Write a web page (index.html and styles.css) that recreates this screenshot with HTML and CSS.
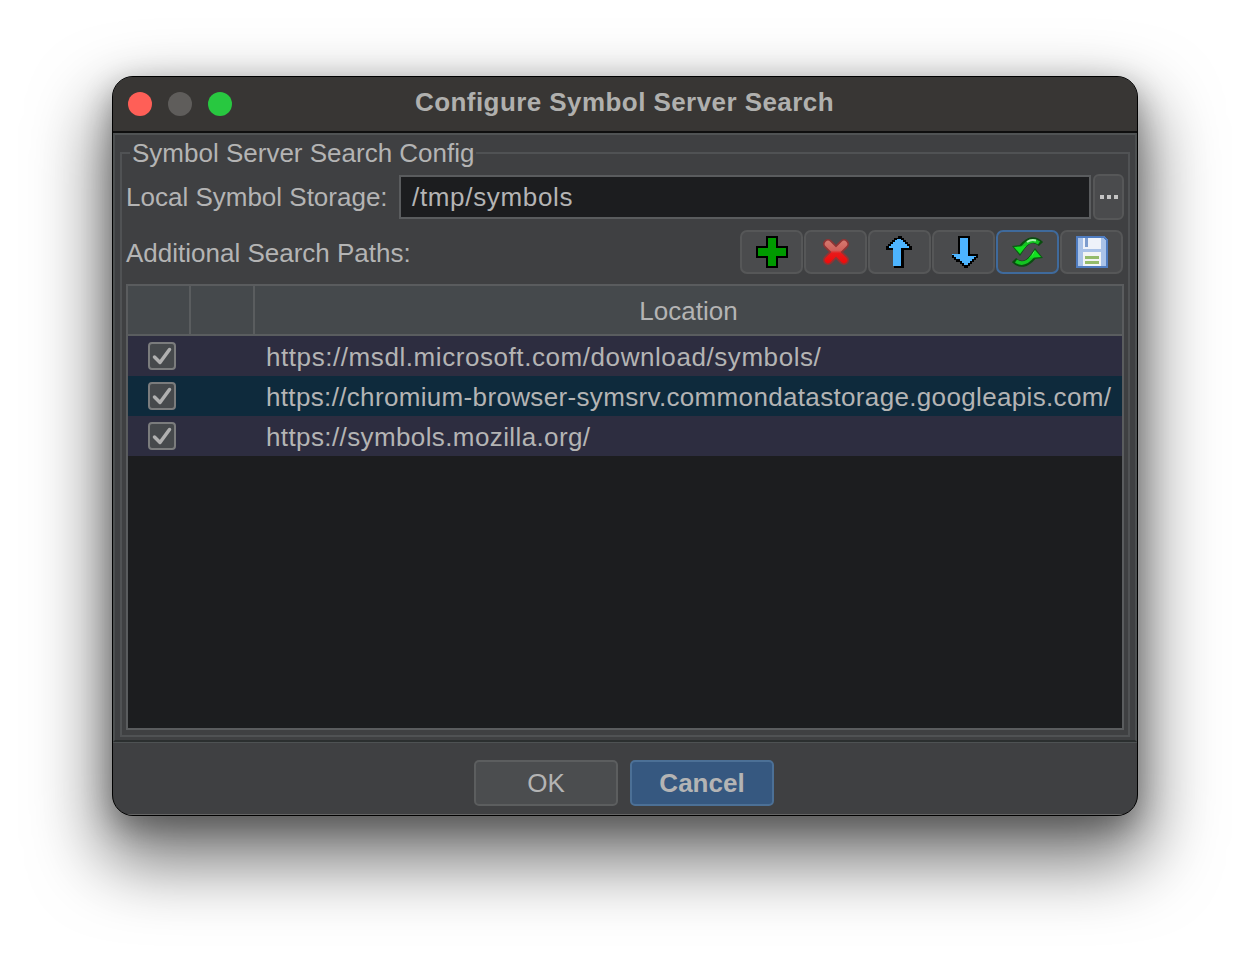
FILE: index.html
```html
<!DOCTYPE html>
<html lang="en">
<head>
<meta charset="utf-8">
<title>Configure Symbol Server Search</title>
<link rel="stylesheet" href="styles.css">
</head>
<body>
<div class="window">
  <header class="titlebar">
    <div class="lights"><span class="light red"></span><span class="light grey"></span><span class="light green"></span></div>
    <div class="title">Configure Symbol Server Search</div>
  </header>
  <main class="main">
    <fieldset class="group">
      <legend class="legend">Symbol Server Search Config</legend>
      <div class="storage">
        <label class="label">Local Symbol Storage:</label>
        <div class="input">/tmp/symbols</div>
        <button class="more" aria-label="Browse"><i></i><i></i><i></i></button>
      </div>
      <div class="paths">
        <span class="label">Additional Search Paths:</span>
        <div class="tools">
          <button class="tool" aria-label="Add">
            <svg width="32" height="32" viewBox="0 0 32 32" shape-rendering="crispEdges"><path d="M10 0h12v10h10v12H22v10H10V22H0V10h10z" fill="#000"/><path d="M12 2h8v10h10v8H20v10h-8V20H2v-8h10z" fill="#009a00"/></svg>
          </button>
          <button class="tool" aria-label="Remove">
            <svg width="32" height="32" viewBox="0 0 32 32">
              <defs><linearGradient id="xg" gradientUnits="userSpaceOnUse" x1="0" y1="5" x2="0" y2="27"><stop offset="0" stop-color="#d4796f"/><stop offset=".42" stop-color="#d0605a"/><stop offset=".55" stop-color="#e81a1a"/><stop offset="1" stop-color="#f00a0a"/></linearGradient></defs>
              <path d="M8 8 24 24M24 8 8 24" fill="none" stroke="#8f3434" stroke-width="10" stroke-linecap="round"/>
              <path d="M8 8 24 24M24 8 8 24" fill="none" stroke="url(#xg)" stroke-width="6.500" stroke-linecap="round"/>
            </svg>
          </button>
          <button class="tool" aria-label="Move up">
            <svg width="32" height="32" viewBox="0 0 32 32" shape-rendering="crispEdges"><path d="M14 0h4v2h2v2h2v2h2v2h2v2h2v4h-8v18H10V14H2v-4h2V8h2V6h2V4h2V2h4z" fill="#000"/><path d="M15 3h2v1h2v2h2v2h2v2h2v2h-8v18h-8V12H5v-2h2V8h2V6h2V4h2V3z" fill="#4db4ff"/></svg>
          </button>
          <button class="tool" aria-label="Move down">
            <svg width="32" height="32" viewBox="0 0 32 32" shape-rendering="crispEdges"><path d="M10 0h12v18h8v4h-2v2h-2v2h-2v2h-2v2h-2v2h-4v-2h-2v-2h-2v-2H8v-2H6v-2H4v-4h6z" fill="#000"/><path d="M12 2h8v18h8v1h-2v2h-2v2h-2v2h-2v2h-4v-2h-2v-2h-2v-2H8v-2H6v-2H4v-1h8z" fill="#4db4ff"/></svg>
          </button>
          <button class="tool focus" aria-label="Refresh">
            <svg width="32" height="32" viewBox="0 0 32 32">
              <g id="sync-top">
                <path d="M29 8Q20 -1 10 11" fill="none" stroke="#0a4d10" stroke-width="6"/>
                <path d="M0 10 16 8 8 20z" fill="#0a5c12"/>
                <path d="M27 7Q19 1 10 12" fill="none" stroke="#14c422" stroke-width="3.500"/>
                <path d="M2 11 14 10 8 18z" fill="#12e020"/>
                <path d="M24 4.500Q19 3 15 6" fill="none" stroke="#a6f5aa" stroke-width="2"/>
              </g>
              <g transform="rotate(180 15.500 16)">
                <path d="M29 8Q20 -1 10 11" fill="none" stroke="#0a4d10" stroke-width="6"/>
                <path d="M0 10 16 8 8 20z" fill="#0a5c12"/>
                <path d="M27 7Q19 1 10 12" fill="none" stroke="#14c422" stroke-width="3.500"/>
                <path d="M2 11 14 10 8 18z" fill="#12e020"/>
                <path d="M8 18 11 12 10 15z" fill="#a6f5aa"/>
              </g>
            </svg>
          </button>
          <button class="tool" aria-label="Save">
            <svg width="32" height="32" viewBox="0 0 32 32" shape-rendering="crispEdges"><path d="M0 0h28l4 4v28H0z" fill="#4f7cc0"/><path d="M2 2h25l3 3v25H2z" fill="#a9c2e8"/><path d="M7 2h18v11H7z" fill="#eef2fa"/><path d="M9 2h3v9H9z" fill="#7d9ccd"/><path d="M7 16h18v14H7z" fill="#f2f4f4"/><path d="M9 20h14v3H9zM9 25h14v3H9z" fill="#94bb6a"/></svg>
          </button>
        </div>
      </div>
      <div class="table">
        <div class="thead">
          <div class="th th-a"></div>
          <div class="th th-b"></div>
          <div class="th th-c">Location</div>
        </div>
        <div class="row alt">
          <div class="cell-check"><span class="check"><svg width="20" height="20" viewBox="0 0 20 20"><path d="M2.500 11 8 16.500 17.500 3.500" class="tick"/></svg></span></div>
          <div class="url url-ms">https://msdl.microsoft.com/download/symbols/</div>
        </div>
        <div class="row sel">
          <div class="cell-check"><span class="check"><svg width="20" height="20" viewBox="0 0 20 20"><path d="M2.500 11 8 16.500 17.500 3.500" class="tick"/></svg></span></div>
          <div class="url url-cr">https://chromium-browser-symsrv.commondatastorage.googleapis.com/</div>
        </div>
        <div class="row alt">
          <div class="cell-check"><span class="check"><svg width="20" height="20" viewBox="0 0 20 20"><path d="M2.500 11 8 16.500 17.500 3.500" class="tick"/></svg></span></div>
          <div class="url url-mz">https://symbols.mozilla.org/</div>
        </div>
      </div>
    </fieldset>
  </main>
  <footer class="footer">
    <button class="btn ok">OK</button>
    <button class="btn cancel">Cancel</button>
  </footer>
</div>
</body>
</html>
```
FILE: styles.css
```css
* { box-sizing: border-box; }
html, body { margin: 0; height: 100%; background: #fff; overflow: hidden; }
body {
  padding: 76px 112px 0;
  font-family: "Liberation Sans", Arial, sans-serif;
  font-size: 26px;
  color: #b4b4b4;
}
button { font: inherit; color: inherit; padding: 0; margin: 0; }
.window {
  width: 1026px;
  height: 740px;
  display: flex;
  flex-direction: column;
  background: #3f4042;
  border: 1px solid #000;
  border-radius: 21px;
  overflow: hidden;
  box-shadow: 0 36px 70px 10px rgba(0,0,0,.55), 0 10px 30px rgba(0,0,0,.3);
}
.titlebar {
  height: 56px;
  flex: none;
  display: flex;
  align-items: center;
  justify-content: center;
  position: relative;
  padding-bottom: 4px;
  background: #383634;
  border-bottom: 2px solid #0f0f0f;
}
.lights { position: absolute; left: 15px; top: 15px; display: flex; gap: 16px; }
.light { width: 24px; height: 24px; border-radius: 50%; }
.red { background: #ff5f57; }
.grey { background: #5f5d5b; }
.green { background: #28c840; }
.title { font-weight: 700; color: #b0b0ae; letter-spacing: .43px; margin-right: 1px; }
.main {
  flex: none;
  height: 609px;
  padding: 3px 5px;
  border: 2px solid #4c4f50;
  border-top-color: #505354;
  border-bottom-color: #2b2f2f;
}
.group {
  margin: 0;
  min-width: 0;
  height: 100%;
  padding: 0 4px 4px;
  border: 2px solid #505254;
}
.legend { padding: 0 2px; margin-left: 4px; line-height: 30px; }
.storage { display: flex; align-items: center; height: 46px; margin-top: 6px; }
.label { line-height: 30px; white-space: nowrap; }
.storage .label { width: 273px; flex: none; }
.input {
  width: 692px;
  height: 44px;
  flex: none;
  border: 2px solid #5a5c5e;
  background: #1c1d1f;
  padding-left: 11px;
  line-height: 40px;
  letter-spacing: .67px;
}
.more {
  width: 31px;
  height: 46px;
  flex: none;
  margin-left: 2px;
  border: 2px solid #565758;
  border-radius: 6px;
  background: #4a4b4d;
  display: flex;
  align-items: center;
  justify-content: center;
  gap: 3px;
}
.more i { width: 4px; height: 4px; background: #c4c4c4; }
.paths { display: flex; align-items: center; justify-content: space-between; height: 44px; margin-top: 10px; }
.paths .label { padding-top: 2px; }
.tools { display: flex; gap: 1px; margin-right: 1px; }
.tool {
  width: 63px;
  height: 44px;
  border: 2px solid #565758;
  border-radius: 7px;
  background: #4a4b4d;
  display: flex;
  align-items: center;
  justify-content: center;
}
.focus { border-color: #3f6a9c; }
.table {
  height: 446px;
  margin-top: 10px;
  border: 2px solid #5a5c5e;
  background: #1c1d1f;
}
.thead { display: flex; height: 50px; background: #45494c; border-bottom: 2px solid #5a5d5f; }
.th { border-right: 2px solid #5a5d5f; }
.th-a { width: 63px; }
.th-b { width: 64px; }
.th-c { flex: 1; border-right: 0; text-align: center; line-height: 50px; }
.row { height: 40px; display: flex; align-items: center; }
.alt { background: #2d2d40; }
.sel { background: #0e2a3c; }
.cell-check { width: 138px; flex: none; padding-left: 20px; display: flex; }
.check {
  width: 28px;
  height: 28px;
  border: 2px solid #7b7c7d;
  border-radius: 4px;
  background: #46494c;
  display: flex;
  align-items: center;
  justify-content: center;
}
.tick { fill: none; stroke: #b0b0b0; stroke-width: 3.500; stroke-linecap: round; stroke-linejoin: round; }
.url { white-space: nowrap; padding-top: 2px; }
.url-ms { letter-spacing: .57px; }
.url-cr { letter-spacing: .34px; }
.url-mz { letter-spacing: .39px; }
.footer {
  flex: 1;
  display: flex;
  justify-content: center;
  gap: 12px;
  padding: 17px 2px 0 0;
  border-top: 1px solid #4e5253;
  border-bottom: 1px solid #666;
}
.btn { width: 144px; height: 46px; border-radius: 5px; border: 2px solid; }
.ok { background: #4b4d4f; border-color: #5c5e5f; }
.cancel { background: #365880; border-color: #4c7096; font-weight: 700; }
```
